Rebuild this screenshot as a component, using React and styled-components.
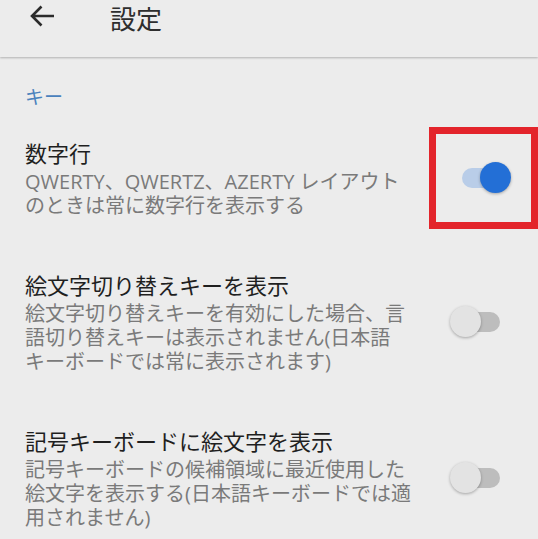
import React from "react";
import styled, { createGlobalStyle } from "styled-components";

const items = [
  {
    title: "数字行",
    summary: "QWERTY、QWERTZ、AZERTY レイアウトのときは常に数字行を表示する",
    on: true,
    marked: true,
  },
  {
    title: "絵文字切り替えキーを表示",
    summary:
      "絵文字切り替えキーを有効にした場合、言語切り替えキーは表示されません(日本語キーボードでは常に表示されます)",
    on: false,
  },
  {
    title: "記号キーボードに絵文字を表示",
    summary:
      "記号キーボードの候補領域に最近使用した絵文字を表示する(日本語キーボードでは適用されません)",
    on: false,
  },
];

const App = () => {
  return (
    <>
      <GlobalStyle />
      <Page lang="ja">
        <Header>
          <BackButton aria-label="戻る">
            <svg width="26" height="24" viewBox="0 0 26 24" fill="none">
              <path
                d="M25 12H3M12.5 2.5L3 12l9.5 9.5"
                stroke="#2b2b2b"
                strokeWidth="2.6"
              />
            </svg>
          </BackButton>
          <Title>設定</Title>
        </Header>
        <SectionLabel>キー</SectionLabel>
        <List>
          {items.map((item) => (
            <Row key={item.title}>
              <Text>
                <ItemTitle>{item.title}</ItemTitle>
                <Summary>{item.summary}</Summary>
              </Text>
              <SwitchCell $marked={item.marked}>
                <Track $on={item.on}>
                  <Thumb $on={item.on} />
                </Track>
              </SwitchCell>
            </Row>
          ))}
        </List>
      </Page>
    </>
  );
};

const GlobalStyle = createGlobalStyle`
  body {
    margin: 0;
    background: #ececec;
    font-family: "Noto Sans CJK JP", sans-serif;
  }
`;

const Page = styled.div`
  width: 538px;
  height: 539px;
  overflow: hidden;
  background: #ececec;
`;

const Header = styled.header`
  height: 57px;
  box-sizing: border-box;
  padding: 2px 0 23px;
  display: flex;
  align-items: center;
  background: #ececec;
  box-shadow: 0 1px 2px rgba(0, 0, 0, 0.25);
  position: relative;
`;

const BackButton = styled.div`
  display: flex;
  margin-left: 29px;
  width: 26px;
  margin-top: -4px;
`;

const Title = styled.h1`
  margin: 0 0 0 55px;
  font-size: 26px;
  font-weight: 400;
  line-height: 32px;
  color: #2e2e2e;
`;

const SectionLabel = styled.div`
  padding: 27px 0 0 25px;
  font-size: 19px;
  line-height: 24px;
  color: #4a82bd;
`;

const List = styled.div`
  margin-top: 19px;
  display: flex;
  flex-direction: column;
  gap: 30px;
`;

const Row = styled.div`
  display: flex;
  align-items: stretch;
  padding-left: 25px;
`;

const Text = styled.div`
  width: 394px;
  margin-right: 10px;
  padding: 11px 0;
  line-break: strict;
`;

const ItemTitle = styled.div`
  font-size: 22px;
  line-height: 28px;
  color: #1f1f1f;
`;

const Summary = styled.div`
  margin-top: 4px;
  font-family: "Open Sans", "Noto Sans CJK JP", sans-serif;
  font-size: 20px;
  line-height: 24px;
  color: #7a7a7a;
`;

const SwitchCell = styled.div`
  flex: 1;
  box-sizing: border-box;
  border: 7px solid ${(p) => (p.$marked ? "#e3242b" : "transparent")};
  display: flex;
  align-items: center;
  padding-left: 26px;
`;

const Track = styled.div`
  position: relative;
  width: 38px;
  height: 20px;
  border-radius: 10px;
  background: ${(p) => (p.$on ? "#b9cde8" : "#bdbdbd")};
`;

const Thumb = styled.div`
  position: absolute;
  top: -6px;
  left: ${(p) => (p.$on ? "18px" : "-12px")};
  width: 31px;
  height: 31px;
  border-radius: 50%;
  background: ${(p) => (p.$on ? "#236fd6" : "#e3e3e3")};
  box-shadow: 0 1px 3px rgba(0, 0, 0, 0.3);
`;

export default App;
